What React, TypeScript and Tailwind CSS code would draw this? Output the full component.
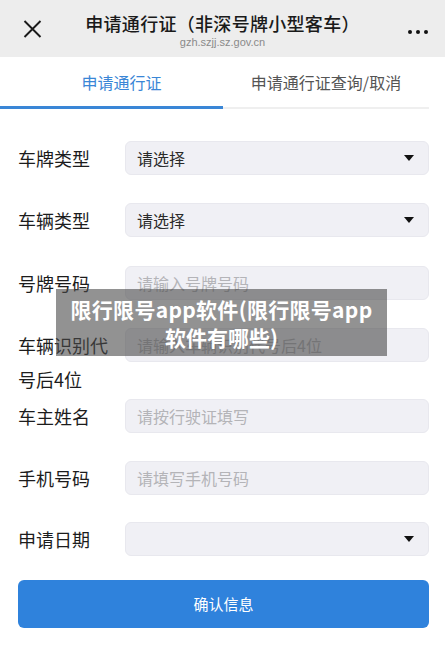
import React from "react";

const font = { fontFamily: '"Noto Sans CJK SC", "Noto Sans", sans-serif' };

function Arrow() {
  return (
    <svg width="10" height="6" viewBox="0 0 10 6" className="shrink-0">
      <path d="M0 0 L10 0 L5 6 Z" fill="#111" />
    </svg>
  );
}

function Row({
  label,
  placeholder,
  select,
  dark,
  mb,
}: {
  label: React.ReactNode;
  placeholder?: string;
  select?: boolean;
  dark?: boolean;
  mb: string;
}) {
  return (
    <div className={`flex items-start ${mb}`}>
      <div className="w-[125px] pl-[18px] pr-[12px] text-[18px] leading-[34px] text-[#1c1c1c] shrink-0">
        {label}
      </div>
      <div className="flex-1 mr-[16px] h-[34px] rounded-[6px] bg-[#f0f0f5] border border-[#e8e8ee] flex items-center pl-[11px] pr-[14px]">
        <span className={`flex-1 text-[16px] ${dark ? "text-[#2a2a2a]" : "text-[#b4b4b8]"}`}>
          {placeholder}
        </span>
        {select && <Arrow />}
      </div>
    </div>
  );
}

export default function App() {
  return (
    <div className="w-[445px] h-[645px] bg-white relative overflow-hidden" style={font}>
      {/* Header */}
      <div className="h-[57px] bg-[#ededed] flex items-center relative">
        <div className="w-[64px] flex justify-center">
          <svg width="19" height="18" viewBox="0 0 19 18">
            <path d="M1.5 1 L17.5 17 M17.5 1 L1.5 17" stroke="#1a1a1a" strokeWidth="1.9" />
          </svg>
        </div>
        <div className="flex-1 flex flex-col items-center pt-[4px]">
          <div className="text-[18px] leading-[22px] font-medium text-[#1a1a1a] tracking-[0.3px]">
            申请通行证（非深号牌小型客车）
          </div>
          <div
            className="text-[11px] leading-[14px] text-[#8a8a8a] mt-[1px]"
            style={{ fontFamily: '"Liberation Sans", Arial, sans-serif' }}
          >
            gzh.szjj.sz.gov.cn
          </div>
        </div>
        <div className="w-[64px] flex justify-center gap-[4px] pl-[10px] pt-[6px]">
          <span className="w-[4px] h-[4px] rounded-full bg-[#111]" />
          <span className="w-[4px] h-[4px] rounded-full bg-[#111]" />
          <span className="w-[4px] h-[4px] rounded-full bg-[#111]" />
        </div>
      </div>

      {/* Tabs */}
      <div className="w-[429px] h-[52px] flex border-b-2 border-[#efefef] relative">
        <div className="w-[223px] pl-[20px] flex items-center justify-center text-[16px] text-[#3a86d6] relative">
          申请通行证
          <div className="absolute left-0 right-0 bottom-[-2px] h-[3px] bg-[#3a86d6]" />
        </div>
        <div className="flex-1 flex items-center justify-center text-[16px] text-[#555]">
          申请通行证查询/取消
        </div>
      </div>

      {/* Form */}
      <div className="pt-[32px]">
        <Row label="车牌类型" placeholder="请选择" select dark mb="mb-[28px]" />
        <Row label="车辆类型" placeholder="请选择" select dark mb="mb-[29px]" />
        <Row label="号牌号码" placeholder="请输入号牌号码" mb="mb-[28px]" />
        <Row label="车辆识别代号后4位" placeholder="请输入车辆识别代号后4位" mb="mb-[3px]" />
        <Row label="车主姓名" placeholder="请按行驶证填写" mb="mb-[28px]" />
        <Row label="手机号码" placeholder="请填写手机号码" mb="mb-[27px]" />
        <Row label="申请日期" placeholder="" select mb="mb-[24px]" />
        <div className="ml-[18px] mr-[16px] h-[48px] rounded-[6px] bg-[#2f82dc] flex items-center justify-center text-[15px] text-white">
          确认信息
        </div>
      </div>

      {/* Watermark overlay */}
      <div className="absolute left-[56px] top-[289px] w-[331px] h-[67px] bg-[#4a4a4a]/60 flex flex-col items-center justify-center">
        <div className="text-[21px] leading-[28px] font-bold text-white tracking-[0.3px]">限行限号app软件(限行限号app</div>
        <div className="text-[21px] leading-[28px] font-bold text-white">软件有哪些)</div>
      </div>
    </div>
  );
}
